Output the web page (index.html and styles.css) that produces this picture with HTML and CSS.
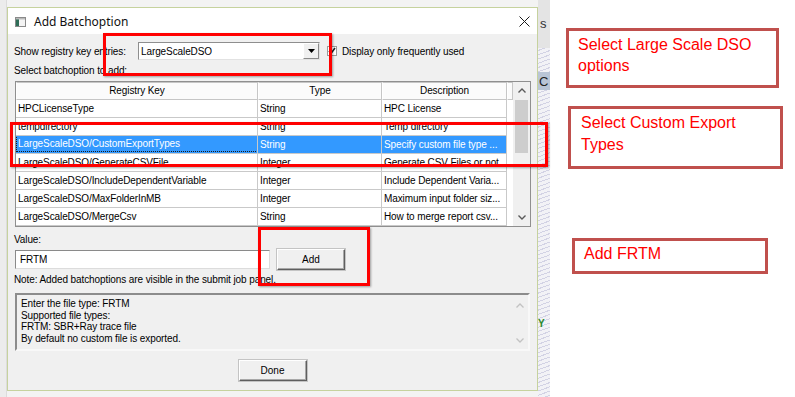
FILE: index.html
```html
<!DOCTYPE html>
<html>
<head>
  <title>Add Batchoption</title>
  <link rel="stylesheet" href="styles.css">
</head>
<body>
  <div class="page">
    <div class="shot">
      <div class="edge-left"></div>

      <div class="dialog">
        <div class="titlebar">
          <svg class="app-icon" width="11" height="10" viewBox="0 0 11 10">
            <rect x="0.5" y="0.5" width="10" height="9" fill="#f4f4f4" stroke="#8a8a8a"/>
            <rect x="1" y="1" width="3" height="8" fill="#2f6e58"/>
            <rect x="1" y="1" width="9" height="1.5" fill="#b9b9b9"/>
          </svg>
          <span class="title">Add Batchoption</span>
          <svg class="close" width="11" height="11" viewBox="0 0 11 11">
            <path d="M0.5 0.5 L10.5 10.5 M10.5 0.5 L0.5 10.5" stroke="#1a1a1a" stroke-width="1"/>
          </svg>
        </div>

        <div class="dlg-body">
          <div class="filter-row">
            <label class="filter-label">Show registry key entries:</label>
            <div class="combo">
              <span class="combo-text">LargeScaleDSO</span>
              <span class="combo-btn">
                <svg width="7" height="4" viewBox="0 0 7 4"><path d="M0 0 H7 L3.5 4 Z" fill="#000"/></svg>
              </span>
            </div>
            <span class="check">
              <svg width="8" height="8" viewBox="0 0 8 8"><path d="M1 4 L3 6.5 L7 1" stroke="#222" stroke-width="1.6" fill="none"/></svg>
            </span>
            <span class="check-label">Display only frequently used</span>
          </div>

          <div class="caption">Select batchoption to add:</div>

          <div class="list">
            <div class="list-main">
              <div class="list-head">
                <div class="hcell">Registry Key</div>
                <div class="hcell">Type</div>
                <div class="hcell">Description</div>
                <div class="hcell"></div>
              </div>
              <div class="list-row">
                <div class="cell">HPCLicenseType</div>
                <div class="cell">String</div>
                <div class="cell">HPC License</div>
              </div>
              <div class="list-row">
                <div class="cell">tempdirectory</div>
                <div class="cell">String</div>
                <div class="cell">Temp directory</div>
              </div>
              <div class="list-row selected">
                <div class="cell"><span class="focus">LargeScaleDSO/CustomExportTypes</span></div>
                <div class="cell">String</div>
                <div class="cell">Specify custom file type ...</div>
              </div>
              <div class="list-row">
                <div class="cell">LargeScaleDSO/GenerateCSVFile</div>
                <div class="cell">Integer</div>
                <div class="cell">Generate CSV Files or not</div>
              </div>
              <div class="list-row">
                <div class="cell">LargeScaleDSO/IncludeDependentVariable</div>
                <div class="cell">Integer</div>
                <div class="cell">Include Dependent Varia...</div>
              </div>
              <div class="list-row">
                <div class="cell">LargeScaleDSO/MaxFolderInMB</div>
                <div class="cell">Integer</div>
                <div class="cell">Maximum input folder siz...</div>
              </div>
              <div class="list-row">
                <div class="cell">LargeScaleDSO/MergeCsv</div>
                <div class="cell">String</div>
                <div class="cell">How to merge report csv...</div>
              </div>
            </div>
            <div class="vscroll">
              <span class="arrow">
                <svg width="8" height="5" viewBox="0 0 8 5"><path d="M0.5 4.5 L4 1 L7.5 4.5" stroke="#5a5a5a" stroke-width="1.4" fill="none"/></svg>
              </span>
              <span class="thumb"></span>
              <span class="track"></span>
              <span class="arrow">
                <svg width="8" height="5" viewBox="0 0 8 5"><path d="M0.5 0.5 L4 4 L7.5 0.5" stroke="#5a5a5a" stroke-width="1.4" fill="none"/></svg>
              </span>
            </div>
          </div>

          <div class="caption value-label">Value:</div>
          <div class="value-row">
            <div class="textbox">FRTM</div>
            <button class="btn">Add</button>
          </div>
          <div class="caption note">Note: Added batchoptions are visible in the submit job panel.</div>

          <div class="help">
            <div class="help-text">
              Enter the file type: FRTM<br>
              Supported file types:<br>
              FRTM: SBR+Ray trace file<br>
              By default no custom file is exported.
            </div>
            <div class="help-scroll">
              <svg width="8" height="5" viewBox="0 0 8 5"><path d="M0.5 4.5 L4 1 L7.5 4.5" stroke="#c2c2c2" stroke-width="1.3" fill="none"/></svg>
              <svg width="8" height="5" viewBox="0 0 8 5"><path d="M0.5 0.5 L4 4 L7.5 0.5" stroke="#c2c2c2" stroke-width="1.3" fill="none"/></svg>
            </div>
          </div>

          <div class="footer">
            <button class="btn">Done</button>
          </div>
        </div>
      </div>

      <div class="edge-right">
        <span class="edge-s">s</span>
        <span class="edge-c">C</span>
        <span class="edge-y">Y</span>
      </div>

      <div class="mark mark-combo"></div>
      <div class="mark mark-row"></div>
      <div class="mark mark-add"></div>
    </div>

    <div class="notes">
      <div class="note-box nb1">Select Large Scale DSO<br>options</div>
      <div class="note-box nb2">Select Custom Export<br>Types</div>
      <div class="note-box nb3">Add FRTM</div>
    </div>
  </div>
</body>
</html>
```

FILE: styles.css
```css
body {
  margin: 0;
  background: #fff;
  font-family: "Liberation Sans", Arial, sans-serif;
}
.page {
  display: flex;
  width: 795px;
  height: 397px;
  overflow: hidden;
}
.shot {
  position: relative;
  display: flex;
  width: 550px;
  height: 397px;
  background: #f3f3f3;
}
.edge-left {
  width: 7px;
  background: #ececec;
  border-right: 1px solid #dcdcdc;
  box-sizing: border-box;
}
.edge-right {
  position: relative;
  width: 12px;
  overflow: hidden;
  font-size: 13px;
  background:
    linear-gradient(#e4e4e4, #e4e4e4) 0 0 / 100% 48px no-repeat,
    linear-gradient(#b9c5d6, #b9c5d6) 0 72px / 100% 18px no-repeat,
    repeating-linear-gradient(160deg, #f2f2f6 0 3px, #d2d2e4 3px 4px);
  background-color: #eeeef2;
}
.edge-s {
  position: absolute;
  left: 2px;
  top: 16px;
  color: #333;
}
.edge-c {
  position: absolute;
  left: 1px;
  top: 74px;
  color: #222;
}
.edge-y {
  position: absolute;
  left: 0;
  top: 318px;
  font-size: 10px;
  font-weight: bold;
  color: #2a8a2a;
}

/* dialog */
.dialog {
  display: flex;
  flex-direction: column;
  width: 531px;
  height: 384px;
  margin-top: 7px;
  border: 1px solid #c6d29e;
  box-sizing: border-box;
  background: #f0f0f0;
  font-size: 10px;
  letter-spacing: -0.1px;
  color: #000;
}
.titlebar {
  display: flex;
  align-items: center;
  height: 26px;
  background: #fff;
  padding: 0 6px 0 7px;
}
.app-icon {
  margin-top: 1px;
}
.title {
  margin-left: 8px;
  font-family: "Noto Sans", "Open Sans", sans-serif;
  font-size: 12px;
  letter-spacing: 0;
  color: #111;
}
.close {
  margin-left: auto;
  margin-right: 1px;
}
.dlg-body {
  padding: 0 6px;
}
.filter-row {
  display: flex;
  align-items: center;
  height: 18px;
  margin-top: 8px;
}
.filter-label {
  width: 124px;
  white-space: nowrap;
}
.combo {
  display: flex;
  align-items: center;
  width: 182px;
  height: 18px;
  box-sizing: border-box;
  background: #fff;
  border: 1px solid;
  border-color: #8e8e8e #e2e2e2 #e2e2e2 #8e8e8e;
}
.combo-text {
  flex: 1;
  padding-left: 2px;
}
.combo-btn {
  display: flex;
  align-items: center;
  justify-content: center;
  width: 16px;
  height: 16px;
  box-sizing: border-box;
  background: #f0f0f0;
  border: 1px solid;
  border-color: #fff #8a8a8a #8a8a8a #fff;
}
.check {
  display: flex;
  align-items: center;
  justify-content: center;
  width: 10px;
  height: 10px;
  margin-left: 7px;
  box-sizing: border-box;
  background: #fff;
  border: 1px solid #9a9a9a;
}
.check-label {
  margin-left: 5px;
}
.caption {
  height: 12px;
  line-height: 12px;
  margin-top: 5px;
  white-space: nowrap;
}

/* registry list */
.list {
  display: flex;
  margin: 4px 0 0 1px;
  border: 1px solid #8f8f8f;
  background: #fff;
}
.list-main {
  width: 497px;
}
.list-head {
  display: grid;
  grid-template-columns: 242px 124px 125px 6px;
  height: 18px;
}
.hcell {
  box-sizing: border-box;
  border: 1px solid #c6c6c6;
  border-left-color: #fff;
  background: #fbfbfb;
  text-align: center;
  line-height: 16px;
}
.list-row {
  display: grid;
  grid-template-columns: 242px 124px 125px;
  height: 18px;
}
.cell {
  box-sizing: border-box;
  padding-left: 2px;
  border-right: 1px solid #c9c9c9;
  border-bottom: 1px solid #c9c9c9;
  line-height: 17px;
  white-space: nowrap;
  overflow: hidden;
}
.selected .cell {
  background: #3399ff;
  color: #fff;
}
.focus {
  display: block;
  margin-left: -1px;
  padding-left: 1px;
  height: 15px;
  line-height: 15px;
  outline: 1px dotted #1a1a1a;
}
.vscroll {
  display: flex;
  flex-direction: column;
  align-items: center;
  width: 17px;
  background: #f0f0f0;
}
.arrow {
  display: flex;
  align-items: center;
  justify-content: center;
  height: 17px;
}
.thumb {
  width: 13px;
  height: 53px;
  margin-top: 1px;
  background: #cdcdcd;
}
.track {
  flex: 1;
}

/* value and help */
.value-label {
  margin-top: 7px;
}
.value-row {
  display: flex;
  align-items: center;
  height: 21px;
  margin-top: 3px;
}
.textbox {
  width: 255px;
  height: 19px;
  margin-left: 1px;
  box-sizing: border-box;
  background: #fff;
  border: 1px solid;
  border-color: #8a8a8a #dcdcdc #dcdcdc #8a8a8a;
  padding-left: 4px;
  line-height: 17px;
}
.btn {
  width: 68px;
  height: 21px;
  margin-left: 7px;
  padding: 0;
  font-family: "Liberation Sans", Arial, sans-serif;
  font-size: 10px;
  color: #000;
  background: #f0f0f0;
  border: 1px solid;
  border-color: #fff #5f5f5f #5f5f5f #fff;
  box-shadow: inset -1px -1px #a8a8a8, 0 0 0 1px #c4c4c4;
}
.note {
  margin-top: 4px;
}
.help {
  display: flex;
  width: 515px;
  height: 58px;
  margin: 7px 0 0 1px;
  box-sizing: border-box;
  border: 2px solid;
  border-color: #8c8c8c #f8f8f8 #f8f8f8 #8c8c8c;
}
.help-text {
  flex: 1;
  padding: 3px 0 0 4px;
  line-height: 11.5px;
}
.help-scroll {
  display: flex;
  flex-direction: column;
  justify-content: space-between;
  align-items: center;
  width: 17px;
  padding: 8px 0 6px;
}
.footer {
  display: flex;
  justify-content: center;
  margin-top: 9px;
}
.footer .btn {
  margin-left: 0;
}

/* red highlight boxes laid over the screenshot */
.mark {
  position: absolute;
  border: 3px solid #ff0000;
  box-shadow: 1px 1px 2px rgba(0, 0, 0, 0.35);
  box-sizing: border-box;
}
.mark-combo {
  left: 103px;
  top: 33px;
  width: 229px;
  height: 43px;
}
.mark-row {
  left: 10px;
  top: 122px;
  width: 538px;
  height: 45px;
}
.mark-add {
  left: 258px;
  top: 227px;
  width: 112px;
  height: 59px;
}

/* callout notes */
.notes {
  display: flex;
  flex-direction: column;
  align-items: flex-start;
  flex: 1;
}
.note-box {
  box-sizing: border-box;
  border: 3px solid #c0504d;
  color: #ff0000;
  font-size: 16px;
  line-height: 21px;
}
.nb1 {
  width: 213px;
  height: 60px;
  margin: 28px 0 0 16px;
  padding: 3px 9px;
}
.nb2 {
  width: 215px;
  height: 63px;
  margin: 18px 0 0 18px;
  padding: 3px 10px;
  line-height: 22px;
}
.nb3 {
  width: 196px;
  height: 36px;
  margin: 69px 0 0 22px;
  padding: 2px 9px;
}
```
